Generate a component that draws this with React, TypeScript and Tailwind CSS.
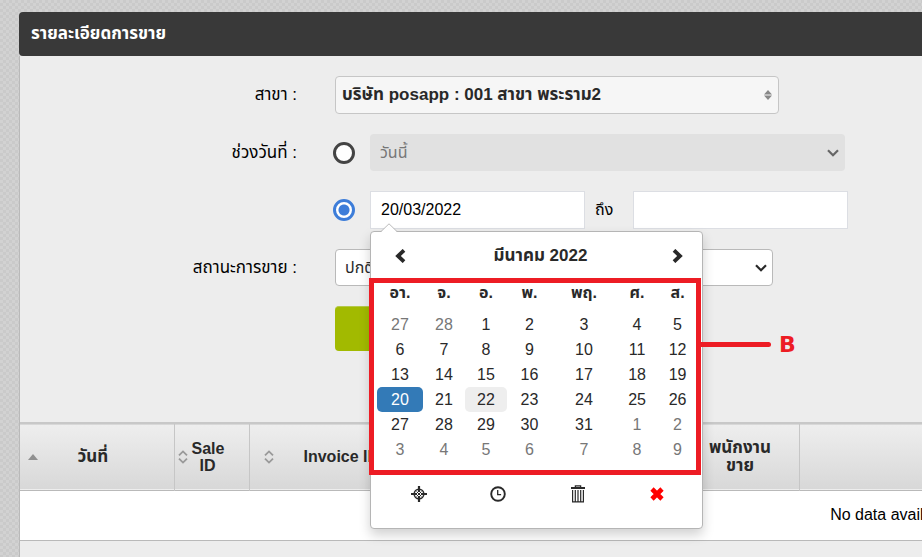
import { ReactNode } from "react";

type Day = { label: number; kind?: "muted" | "active" | "today" };

const dayNames = ["อา.", "จ.", "อ.", "พ.", "พฤ.", "ศ.", "ส."];

function buildWeeks(): Day[][] {
  const days: Day[] = [{ label: 27, kind: "muted" }, { label: 28, kind: "muted" }];
  for (let d = 1; d <= 31; d++) {
    days.push({ label: d, kind: d === 20 ? "active" : d === 22 ? "today" : undefined });
  }
  for (let d = 1; d <= 9; d++) {
    days.push({ label: d, kind: "muted" });
  }
  return [0, 1, 2, 3, 4, 5].map((w) => days.slice(w * 7, w * 7 + 7));
}

const weeks = buildWeeks();

const dayStyles = {
  muted: "text-[#777777]",
  active: "bg-[#337ab7] text-white",
  today: "bg-[#eeeeee]",
  normal: "",
};

function Chevron({ flip }: { flip?: boolean }) {
  return (
    <svg
      viewBox="0 0 12 14"
      className={flip ? "h-[14px] w-3 rotate-180" : "h-[14px] w-3"}
      fill="none"
      stroke="currentColor"
      strokeWidth="3.8"
    >
      <path d="M10 1.3 4 7l6 5.7" />
    </svg>
  );
}

function CrosshairIcon() {
  return (
    <svg viewBox="0 0 16 16" className="size-4" fill="none" stroke="currentColor">
      <circle cx="8" cy="8" r="4.8" strokeWidth="1.5" />
      <path d="M8 0v6M8 10V16M0 8h6M10 8H16" strokeWidth="2.2" />
      <path d="M5.6 5.6l4.8 4.8M10.4 5.6l-4.8 4.8" strokeWidth="1" />
    </svg>
  );
}

function ClockIcon() {
  return (
    <svg viewBox="0 0 16 16" className="size-4" fill="none" stroke="currentColor">
      <circle cx="8" cy="8" r="6.8" strokeWidth="1.9" />
      <path d="M7.7 4v4.6h3.4" strokeWidth="1.3" />
    </svg>
  );
}

function TrashIcon() {
  return (
    <svg viewBox="0 0 16 18" className="h-[18px] w-4" fill="none" stroke="currentColor">
      <path d="M5.4 2V.9h5.2V2" strokeWidth="1.3" />
      <path d="M1 3h14" strokeWidth="2" />
      <path d="M2.6 5v11.9h10.8V5M5.3 5v12M8 5v12M10.7 5v12" strokeWidth="1.2" />
    </svg>
  );
}

function RemoveIcon() {
  return (
    <svg viewBox="0 0 14 14" className="size-[14px] text-[#ff0000]" stroke="currentColor" strokeWidth="4.6">
      <path d="M2 2l10 10M12 2L2 12" />
    </svg>
  );
}

function Caret({ className }: { className: string }) {
  return (
    <svg
      viewBox="0 0 12 8"
      className={`pointer-events-none absolute right-[6px] top-1/2 h-2 w-3 -translate-y-1/2 ${className}`}
      fill="none"
      stroke="currentColor"
      strokeWidth="2.2"
    >
      <path d="M1 1.2l5 5 5-5" />
    </svg>
  );
}

function SortIcon() {
  return (
    <svg viewBox="0 0 10 14" className="h-[14px] w-[10px] shrink-0 text-[#999999]" fill="none" stroke="currentColor" strokeWidth="1.8">
      <path d="M1 5.4l4-4 4 4M1 8.6l4 4 4-4" />
    </svg>
  );
}

function Label({ htmlFor, children }: { htmlFor: string; children: ReactNode }) {
  return (
    <label htmlFor={htmlFor} className="w-[277px] shrink-0 text-right text-[17px]">
      {children}
    </label>
  );
}

function Calendar() {
  return (
    <div className="absolute left-0 top-full z-10 mt-[2px] h-[298px] w-[333px] rounded border border-[#b5b5b5] bg-white p-[5px] pl-[6px] text-[#292929] shadow-[0_6px_12px_rgba(0,0,0,0.18)]">
      <svg viewBox="0 0 16 9" className="absolute -top-[9px] left-[10px] h-[9px] w-4">
        <path d="M0 9l8-8 8 8z" fill="#ffffff" />
        <path d="M0 8.5l8-7.7 8 7.7" fill="none" stroke="#bbbbbb" />
      </svg>
      <table className="w-full table-fixed border-separate border-spacing-0 text-center">
        <colgroup>
          <col className="w-[46px]" />
          <col className="w-[42px]" />
          <col className="w-[42px]" />
          <col className="w-[45px]" />
          <col className="w-[64px]" />
          <col className="w-[42px]" />
          <col className="w-[39px]" />
        </colgroup>
        <thead>
          <tr className="h-[37px]">
            <th className="p-0">
              <button type="button" aria-label="Previous month" className="flex w-full justify-center">
                <Chevron />
              </button>
            </th>
            <th colSpan={5} className="p-0 text-[17px] font-bold">มีนาคม 2022</th>
            <th className="p-0">
              <button type="button" aria-label="Next month" className="flex w-full justify-center">
                <Chevron flip />
              </button>
            </th>
          </tr>
          <tr className="h-[38px]">
            {dayNames.map((name) => (
              <th key={name} className="p-0 font-bold">{name}</th>
            ))}
          </tr>
        </thead>
        <tbody>
          {weeks.map((week, i) => (
            <tr key={i}>
              {week.map((day) => (
                <td key={day.label} className={`h-[25px] rounded-[5px] p-0 leading-5 ${dayStyles[day.kind ?? "normal"]}`}>
                  {day.label}
                </td>
              ))}
            </tr>
          ))}
        </tbody>
      </table>
      <div className="mt-4 grid h-8 grid-cols-4 pl-[2px]">
        <button type="button" aria-label="Today" className="flex items-center justify-center"><CrosshairIcon /></button>
        <button type="button" aria-label="Pick time" className="flex items-center justify-center"><ClockIcon /></button>
        <button type="button" aria-label="Clear" className="flex items-center justify-center"><TrashIcon /></button>
        <button type="button" aria-label="Close" className="flex items-center justify-center"><RemoveIcon /></button>
      </div>

      {/* callout around the day grid */}
      <div className="pointer-events-none absolute -left-[2px] top-[46px] h-[197px] w-[332px] border-[5px] border-[#ed1c24]">
        <div className="absolute left-full top-[59px] flex h-[5px] items-center gap-2">
          <span className="h-[5px] w-[75px] rounded-r-full bg-[#ed1c24]" />
          <span className="font-['DejaVu_Sans','Noto_Sans',sans-serif] text-[22px] font-bold leading-6 text-[#ed1c24]">B</span>
        </div>
      </div>
    </div>
  );
}

function SalesTable() {
  return (
    <div className="overflow-hidden">
      <table className="w-[1800px] table-fixed border-collapse">
        <colgroup>
          <col className="w-[154px]" />
          <col className="w-[75px]" />
          <col className="w-[160px]" />
          <col className="w-[272px]" />
          <col className="w-[118px]" />
          <col />
        </colgroup>
        <thead className="border-b border-t-2 border-b-[#b9b9b9] border-t-[#c8c8c8] bg-linear-to-b from-[#eeeeee] to-[#d8d8d8] font-bold leading-[17px] text-[#292929]">
          <tr className="h-[67px]">
            <th className="border-r border-[#c6c6c6] p-0">
              <div className="flex items-center pl-2">
                <svg viewBox="0 0 10 6" className="h-[6px] w-[10px] text-[#909090]" fill="currentColor">
                  <path d="M0 6l5-6 5 6z" />
                </svg>
                <span className="flex-1 pr-[26px] text-[17px]">วันที่</span>
              </div>
            </th>
            <th className="border-r border-[#c6c6c6] p-0">
              <div className="flex items-center gap-1 pl-[3px]">
                <SortIcon />
                <span className="w-8">Sale ID</span>
              </div>
            </th>
            <th className="p-0">
              <div className="flex items-center gap-[30px] pl-[14px]">
                <SortIcon />
                <span className="whitespace-nowrap">Invoice ID</span>
              </div>
            </th>
            <th className="border-r border-[#c6c6c6] p-0" />
            <th className="border-r border-[#c6c6c6] p-0 text-[17px] leading-[18px]">
              พนักงาน
              <br />
              ขาย
            </th>
            <th className="p-0" />
          </tr>
        </thead>
        <tbody>
          <tr className="h-[50px] border-b border-[#b9b9b9] bg-white">
            <td colSpan={6} className="p-0 text-center">No data available in table</td>
          </tr>
        </tbody>
      </table>
    </div>
  );
}

export default function App() {
  return (
    <main className="min-h-screen overflow-hidden bg-[#d0d0d0] bg-[repeating-conic-gradient(#cacaca_0_25%,#d2d2d2_0_50%)] bg-size-[6px_6px] pl-[19px] pt-3 font-['Liberation_Sans','Noto_Sans_Thai',sans-serif] text-base text-black">
      <h1 className="flex h-11 items-center rounded-l-sm bg-[#393939] px-3 text-[17px] font-bold text-white">
        รายละเอียดการขาย
      </h1>
      <section className="min-h-[501px] border-l border-[#b9b9b9] bg-[#ededed]">
        <form className="flex flex-col gap-5 pb-[71px] pt-5">
          <div className="flex h-[38px] items-center gap-[38px]">
            <Label htmlFor="branch">สาขา :</Label>
            <div className="relative h-full w-[444px]">
              <select id="branch" className="h-full w-full appearance-none rounded border border-[#c6c6c6] bg-[#f6f6f6] px-[6px] text-[17px] font-bold text-[#292929]">
                <option>บริษัท posapp : 001 สาขา พระราม2</option>
              </select>
              <svg viewBox="0 0 8 10" className="pointer-events-none absolute right-[7px] top-[14px] h-[10px] w-2 text-[#888888]" fill="currentColor">
                <path d="M0 4.4l4-4.4 4 4.4zM0 5.6h8l-4 4.4z" />
              </svg>
            </div>
          </div>

          <div className="flex h-[37px] items-center">
            <Label htmlFor="range">ช่วงวันที่ :</Label>
            <input
              type="radio"
              name="mode"
              aria-label="ช่วงวันที่"
              className="ml-9 mr-[15px] size-[22px] shrink-0 appearance-none rounded-full border-[3px] border-[#444444] bg-white"
            />
            <div className="relative h-full w-[475px]">
              <select id="range" disabled className="h-full w-full appearance-none rounded bg-[#e1e1e1] px-[10px] text-[#777777]">
                <option>วันนี้</option>
              </select>
              <Caret className="text-[#666666]" />
            </div>
          </div>

          <div className="flex h-[38px] items-center">
            <input
              type="radio"
              name="mode"
              defaultChecked
              aria-label="20/03/2022"
              className="ml-[313px] mr-[15px] size-[22px] shrink-0 appearance-none rounded-full border-[3px] border-[#3d7dd9] bg-[radial-gradient(circle,#3d7dd9_5px,#ffffff_6px)]"
            />
            <div className="relative h-full w-[215px]">
              <input
                aria-label="วันที่เริ่ม"
                defaultValue="20/03/2022"
                className="h-full w-full border border-[#dcdee3] bg-white px-[10px]"
              />
              <Calendar />
            </div>
            <label htmlFor="until" className="w-12 pl-[10px]">ถึง</label>
            <input id="until" className="h-full w-[215px] border border-[#dcdee3] bg-white px-[10px]" />
          </div>

          <div className="flex h-[37px] items-center gap-[38px]">
            <Label htmlFor="status">สถานะการขาย :</Label>
            <div className="relative h-full w-[438px]">
              <select id="status" className="h-full w-full appearance-none rounded border border-[#b9b9b9] bg-white px-[9px] text-[#292929]">
                <option>ปกติ</option>
              </select>
              <Caret className="text-[#292929]" />
            </div>
          </div>

          <button
            type="submit"
            aria-label="ค้นหา"
            className="ml-[315px] h-[45px] w-[200px] rounded border-t border-[#b5c94a] bg-[#a2ba00]"
          />
        </form>
        <SalesTable />
      </section>
    </main>
  );
}
